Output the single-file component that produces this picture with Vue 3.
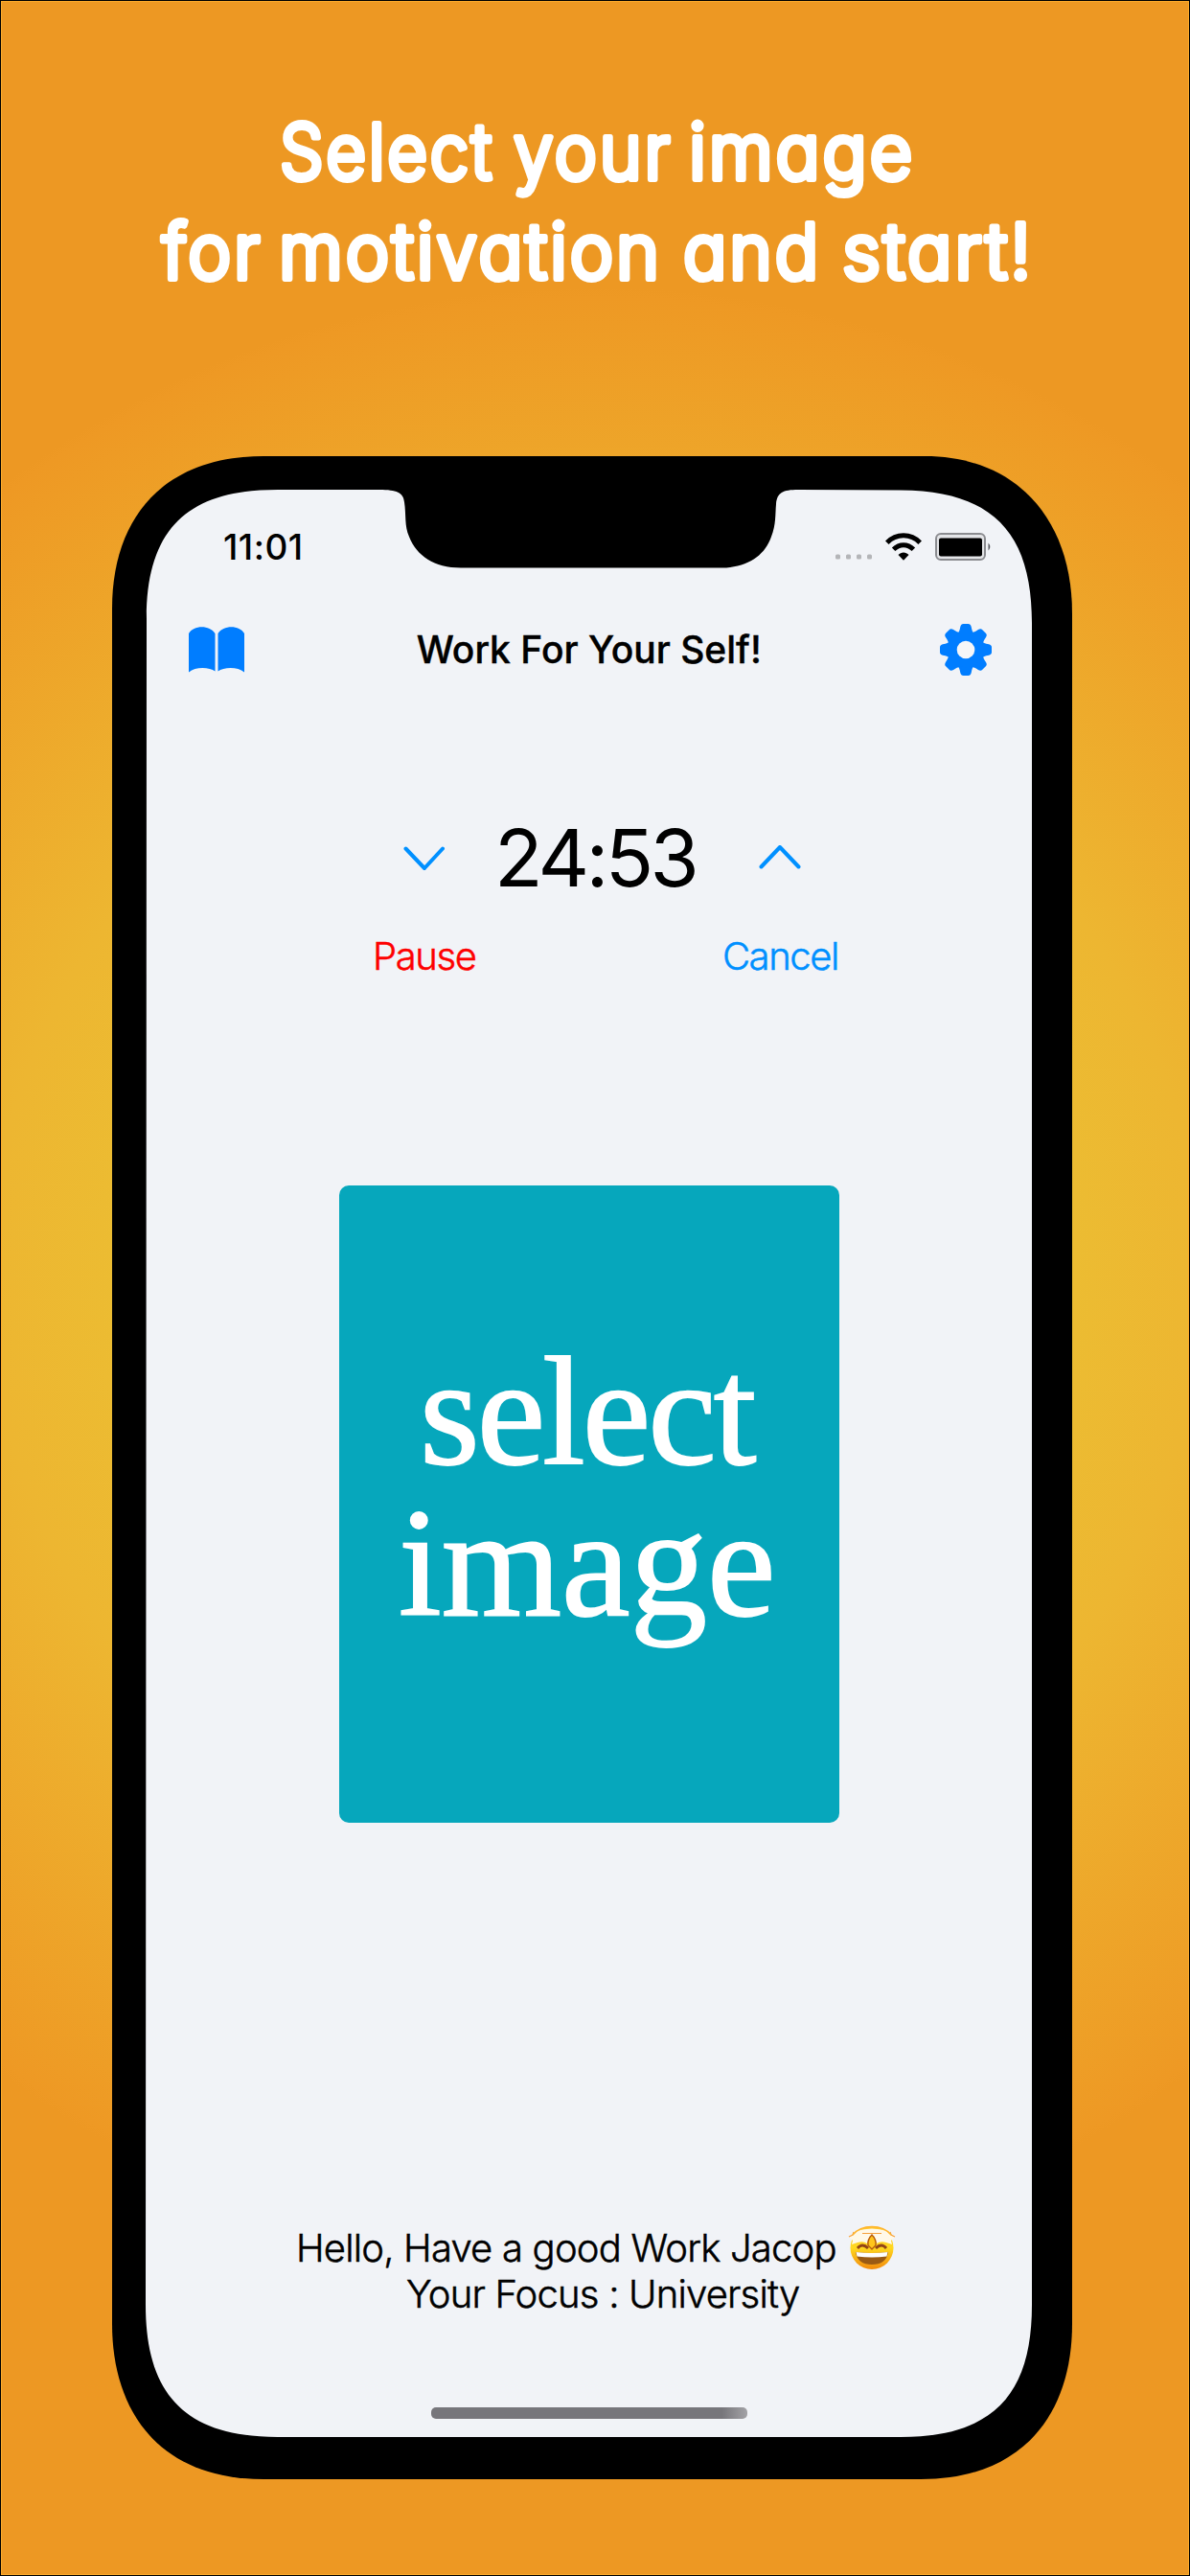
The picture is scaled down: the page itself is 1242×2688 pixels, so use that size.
<script setup>
const teeth = [0, 45, 90, 135, 180, 225, 270, 315]

const headline = [
  {
    y: 187,
    words: [
      { t: 'Select', x: 292, w: 224 },
      { t: 'your', x: 536, w: 166 },
      { t: 'image', x: 719, w: 236 }
    ]
  },
  {
    y: 290.5,
    words: [
      { t: 'for', x: 169, w: 105 },
      { t: 'motivation', x: 291, w: 400 },
      { t: 'and', x: 713, w: 144 },
      { t: 'start!', x: 879, w: 200 }
    ]
  }
]
</script>

<template>
  <main class="poster">
    <h1 class="headline">
      <svg width="1240" height="475" viewBox="1 1 1240 475">
        <text v-for="line in headline" :key="line.y" :y="line.y">
          <tspan v-for="word in line.words" :key="word.t" :x="word.x" :textLength="word.w" lengthAdjust="spacingAndGlyphs">{{ word.t }}</tspan>
        </text>
      </svg>
    </h1>

    <section class="phone">
      <svg class="frame" viewBox="117 476 1002 2111" width="1002" height="2111">
        <path fill="#000" d="M117 635C117 541 170 476 275 476H965C1060 476 1119 541 1119 640V2425C1119 2515 1071 2587 961 2587H275C165 2587 117 2515 117 2425Z" />
        <path fill="#f1f3f7" d="M153 645C153 548 200 511 290 511H396C414 511 421 514 422 524C424 537 422 549 427 560C435 580 453 592.5 481 592.5H752C780 592.5 798 580 805 560C810 547 809 537 810 526C811 514 817 511 833 511L940 511.500C1040 512 1077 560 1077 650V2405C1077 2495 1040 2543 940 2543H290C190 2543 152 2495 152 2405Z" />
      </svg>

      <div class="screen">
        <header class="status">
          <span class="clock">11:01</span>
          <div class="indicators">
            <svg width="40" height="8" viewBox="0 0 40 8" class="dots" fill="#b4b5b8">
              <rect v-for="n in 4" :key="n" :x="n * 11 - 10" y="1.500" width="5" height="5" rx="1.500" />
            </svg>
            <svg class="wifi" width="38" height="29" viewBox="0 0 38 29" fill="none" stroke="#000" stroke-width="5">
              <path d="M1.800 10.200C11.500 .4 26.500 .4 36.200 10.200" />
              <path d="M8.600 17.200C14.800 11.200 23.200 11.200 29.400 17.200" />
              <path fill="#000" stroke="none" d="M13.500 23C16.500 19.600 21.500 19.600 24.500 23L19 28.800Z" />
            </svg>
            <svg width="60" height="29" viewBox="0 0 60 29">
              <rect x="1" y="1" width="51" height="27" rx="5" fill="#e4e5e8" stroke="#8b8c90" stroke-width="2" />
              <rect x="4" y="5.500" width="45" height="19" rx="2" fill="#000" />
              <path d="M55.500 10.500q3.500 4 0 8z" fill="#55565c" />
            </svg>
          </div>
        </header>

        <nav class="nav">
          <svg width="58" height="48" viewBox="0 0 58 48" fill="#007dff">
            <path d="M0 7C5-2 22-2 27.500 7V46.500C22 42 7 41 0 47.500Z" />
            <path d="M30.500 7C36-2 53-2 58 7V47.500C51 41 36 42 30.500 46.500Z" />
          </svg>
          <span class="title">Work For Your Self!</span>
          <svg width="54" height="54" viewBox="-27 -27 54 54">
            <g fill="#007dff">
              <path v-for="a in teeth" :key="a" :transform="`rotate(${a})`" d="M-9.500-16C-7-18-6.500-20-5.700-24Q-5-27-2.500-27H2.500Q5-27 5.700-24C6.500-20 7-18 9.500-16L0-8Z" />
              <circle r="18.500" />
            </g>
            <circle r="9.300" fill="#f5f6f8" />
          </svg>
        </nav>

        <div class="timer">
          <svg class="down" width="44" height="28" viewBox="0 0 44 28"><path d="M2.500 3.500L22 24L41 3.500" /></svg>
          <span class="time">24:53</span>
          <svg class="up" width="44" height="28" viewBox="0 0 44 28"><path d="M2.500 22.500L22 2L41.500 22.500" /></svg>
        </div>

        <div class="actions">
          <span class="pause">Pause</span>
          <span class="cancel">Cancel</span>
        </div>

        <div class="picture">
          <span class="p1">select</span>
          <span class="p2">image</span>
        </div>

        <div class="note">
          <div class="hello">
            <span class="l1">Hello, Have a good Work Jacop</span>
            <svg width="50" height="47" viewBox="0 0 50 47">
              <defs>
                <linearGradient id="face" x1="0" y1="0" x2="0" y2="1">
                  <stop offset="0" stop-color="#ffc530" />
                  <stop offset=".5" stop-color="#ffd820" />
                  <stop offset="1" stop-color="#f28a0c" />
                </linearGradient>
              </defs>
              <circle cx="25" cy="23.500" r="22.500" fill="url(#face)" />
              <path d="M1 12L5 10L9 6Q25 1 41 6L45 10L49 12L45 16L46 20L40 18Q34 16 30 19L27 11H23L20 19Q16 16 10 18L4 20L5 16Z" fill="#fff9e8" />
              <path d="M1 12L5 10L6 7M49 12L45 10L44 7M15 8.500H35" fill="none" stroke="#f5a03a" stroke-width="1.200" />
              <path d="M5 10Q12 1.500 25 1.500Q38 1.500 45 10" fill="none" stroke="#ffb52c" stroke-width="1.600" />
              <path d="M25 10Q30 15 29 21L25 25L21 21Q20 15 25 10Z" fill="#ffc51c" stroke="#b65b0c" stroke-width="1.400" />
              <path d="M10 24Q15 18 21 24M29 24Q35 18 40 24" stroke="#924417" stroke-width="2.800" fill="none" />
              <path d="M8 28Q25 30 42 28Q40 41 25 41Q10 41 8 28Z" fill="#9a5a14" />
              <path d="M8.500 28Q25 30 41.500 28L40.500 32.500Q25 34.500 9.500 32.500Z" fill="#fff" />
            </svg>
          </div>
          <span class="l2">Your Focus : University</span>
        </div>

        <div class="home"></div>
      </div>
    </section>
  </main>
</template>

<style>
body { margin: 0; }
</style>

<style scoped>
.poster {
  box-sizing: border-box;
  width: 1242px;
  height: 2688px;
  border: 1px solid #000;
  box-shadow: inset 0 0 0 1px #fbaa2b;
  background: radial-gradient(circle 1035px at 620px 1334px, #ecc033 0%, #ecbc32 48%, #edb631 61%, #ee9924 99%, #ed9823 100%);
  display: flex;
  flex-direction: column;
  align-items: center;
  font-family: Inter, "Liberation Sans", sans-serif;
  overflow: hidden;
}
.headline {
  margin: 0;
  height: 475px;
  font-size: 80px;
  font-weight: 300;
  font-feature-settings: "cv11";
}
.headline svg { display: block; }
.headline text {
  fill: #fff;
  stroke: #fff;
  stroke-width: 6px;
  stroke-linejoin: round;
  stroke-linecap: round;
  letter-spacing: 3px;
}
.phone { position: relative; width: 1002px; height: 2111px; margin-right: 6px; flex: none; }
.frame { position: absolute; left: 0; top: 0; }
.screen {
  position: relative;
  box-sizing: border-box;
  height: 2111px;
  padding: 80px 0 0;
  display: flex;
  flex-direction: column;
  color: #000;
}
.status { height: 29px; padding: 0 83px 0 116px; display: flex; justify-content: space-between; align-items: center; }
.clock { font-size: 37px; font-weight: 500; line-height: 31px; letter-spacing: .5px; }
.indicators { display: flex; align-items: center; }
.dots { margin: 21px 13px 0 0; }
.wifi { margin-right: 14px; }
.nav { height: 54px; margin-top: 66px; padding: 0 84px 0 79.5px; display: flex; justify-content: space-between; align-items: center; }
.title { font-size: 39px; font-weight: 500; line-height: 50px; white-space: nowrap; margin: 0 6px 0 0; -webkit-text-stroke: .4px #000; }
.timer { height: 90px; margin-top: 146px; display: flex; align-items: center; padding-left: 304px; }
.timer path { fill: none; stroke: #0090ff; stroke-width: 4; stroke-linecap: round; stroke-linejoin: round; }
.time { width: 210px; margin: 0 65px 2px 51px; font-size: 83px; line-height: 90px; letter-spacing: -3.7px; white-space: nowrap; }
.up { margin-left: 1px; }
.actions { display: flex; justify-content: space-between; padding: 0 244px 0 272px; margin-top: 32px; height: 50px; line-height: 50px; font-size: 40px; font-weight: 300; letter-spacing: -1.4px; -webkit-text-stroke: .5px currentColor; }
.pause { color: #fe0000; }
.cancel { color: #0090ff; }
.picture {
  box-sizing: border-box;
  width: 522px;
  height: 665px;
  margin: 213.5px 0 0 237px;
  padding-top: 157px;
  border-radius: 10px;
  background: #06a7bc;
  color: #fff;
  font-family: "Liberation Serif", serif;
  font-size: 161px;
  line-height: 158px;
  -webkit-text-stroke: 1.8px #fff;
}
.picture span { display: block; width: max-content; }
.p1 { margin-left: 84px; letter-spacing: -3px; }
.p2 { margin-left: 62px; letter-spacing: 0; }
.note { margin-top: 420px; height: 96px; font-size: 40px; line-height: 48px; font-weight: 300; -webkit-text-stroke: .5px #000; }
.note span { white-space: nowrap; }
.hello { display: flex; align-items: center; height: 48px; padding-left: 192px; }
.l1 { width: 576px; letter-spacing: -.8px; }
.l2 { display: block; padding-left: 307px; letter-spacing: -.8px; }
.home { width: 330px; height: 12px; margin: 94px 0 0 333px; border-radius: 5px; background: linear-gradient(90deg, #77767b 0, #77767b 92%, #a3a2a6 100%); }
</style>
